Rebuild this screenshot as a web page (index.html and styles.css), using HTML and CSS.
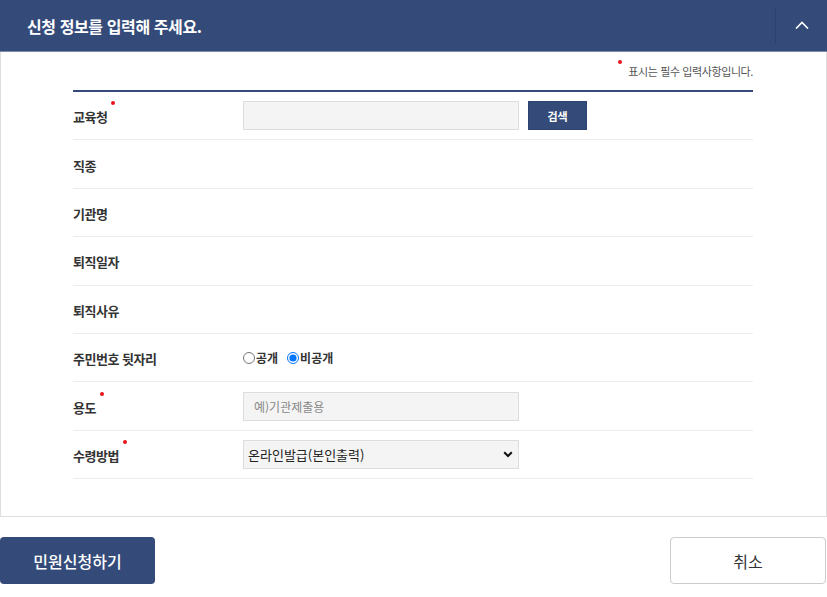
FILE: index.html
```html
<!DOCTYPE html>
<html lang="ko">
<head>
<meta charset="utf-8">
<title>신청 정보</title>
<link rel="stylesheet" href="styles.css">
</head>
<body>
<div class="panel">
  <div class="panel-head">
    <h2 class="panel-title">신청 정보를 입력해 주세요.</h2>
    <button class="toggle" type="button" aria-label="접기">
      <svg width="14" height="8" viewBox="0 0 14 8"><path d="M1 7.5 L7 1.5 L13 7.5" fill="none" stroke="#fff" stroke-width="1.6"/></svg>
    </button>
  </div>
  <div class="panel-body">
    <p class="req-note"><span class="dot"></span>표시는 필수 입력사항입니다.</p>
    <div class="form">
      <div class="row">
        <div class="label">교육청<span class="dot"></span></div>
        <div class="field">
          <input class="txt" type="text">
          <button class="btn-search" type="button">검색</button>
        </div>
      </div>
      <div class="row"><div class="label">직종</div><div class="field"></div></div>
      <div class="row"><div class="label">기관명</div><div class="field"></div></div>
      <div class="row"><div class="label">퇴직일자</div><div class="field"></div></div>
      <div class="row"><div class="label">퇴직사유</div><div class="field"></div></div>
      <div class="row">
        <div class="label">주민번호 뒷자리</div>
        <div class="field radios">
          <label class="radio"><input type="radio" name="rrn">공개</label>
          <label class="radio"><input type="radio" name="rrn" checked>비공개</label>
        </div>
      </div>
      <div class="row">
        <div class="label">용도<span class="dot"></span></div>
        <div class="field"><input class="txt" type="text" placeholder="예)기관제출용"></div>
      </div>
      <div class="row">
        <div class="label">수령방법<span class="dot"></span></div>
        <div class="field">
          <div class="select">
            <span>온라인발급(본인출력)</span>
            <svg width="10" height="7" viewBox="0 0 10 7"><path d="M1.2 1.2 L5 5 L8.8 1.2" fill="none" stroke="#111" stroke-width="2"/></svg>
          </div>
        </div>
      </div>
    </div>
  </div>
</div>
<div class="actions">
  <button class="btn-primary" type="button">민원신청하기</button>
  <button class="btn-cancel" type="button">취소</button>
</div>
</body>
</html>
```

FILE: styles.css
```css
* { box-sizing: border-box; }
html, body { margin: 0; padding: 0; background: #fff; }
body {
  font-family: "Noto Sans CJK KR", "Noto Sans", sans-serif;
  color: #333;
  width: 827px;
}
.panel { width: 827px; }
.panel-head {
  height: 52px;
  background: #344b79;
  border-bottom: 1px solid #7d8cab;
  display: flex;
  align-items: center;
  justify-content: space-between;
  padding-left: 27px;
}
.panel-title {
  margin: 0;
  color: #fff;
  font-size: 16px;
  font-weight: 700;
  letter-spacing: -0.4px;
}
.toggle {
  width: 52px;
  height: 36px;
  border: 0;
  border-left: 1px solid #2c416b;
  background: transparent;
  display: flex;
  align-items: center;
  justify-content: center;
  padding: 0 0 2px 0;
  margin-right: 0;
}
.panel-body {
  border: 1px solid #dedede;
  border-top: 0;
  padding: 10px 73px 37px 72px;
  height: 465px;
}
.req-note {
  margin: 0;
  text-align: right;
  font-size: 11px;
  color: #555;
  letter-spacing: -0.4px;
  height: 28px;
  line-height: 18px;
}
.req-note .dot { margin: 0 6px 0 0; top: -2px; }
.dot {
  display: inline-block;
  width: 4px;
  height: 4px;
  border-radius: 50%;
  background: #e8141c;
  position: relative;
  vertical-align: top;
}
.form { border-top: 2px solid #344b79; }
.row {
  display: flex;
  align-items: center;
  height: 48.4px;
  border-bottom: 1px solid #ececec;
}
.label {
  width: 170px;
  font-size: 13px;
  font-weight: 700;
  color: #333;
  letter-spacing: -0.5px;
  padding-top: 2px;
}
.label .dot { margin-left: 4px; top: -6px; }
.field { display: flex; align-items: center; gap: 9px; }
.txt {
  width: 276px;
  height: 29px;
  margin: 0;
  border: 1px solid #dddddd;
  background: #f4f4f4;
  font-family: inherit;
  font-size: 12px;
  padding: 0 10px;
  color: #333;
}
.txt::placeholder { color: #888; }
.btn-search {
  width: 59px;
  height: 29px;
  border: 1px solid #2e4470;
  background: #344b79;
  color: #fff;
  font-family: inherit;
  font-size: 11px;
  font-weight: 700;
  padding: 0;
}
.radios { gap: 9px; font-size: 12px; font-weight: 700; color: #333; }
.radio { display: flex; align-items: center; }
.radio input { margin: 0 1px 0 0; width: 12px; height: 12px; }
.select {
  width: 276px;
  height: 29px;
  border: 1px solid #dddddd;
  background: #f4f4f4;
  display: flex;
  align-items: center;
  justify-content: space-between;
  padding: 0 4px 0 4px;
  font-size: 13px;
  color: #222;
}
.select svg { margin-right: 1px; }
.actions {
  display: flex;
  justify-content: space-between;
  margin-top: 20px;
  width: 827px;
}
.btn-primary {
  width: 155px;
  height: 47px;
  border: 0;
  border-radius: 4px;
  background: #344b79;
  color: #fff;
  font-family: inherit;
  font-size: 16px;
  font-weight: 500;
}
.btn-cancel {
  width: 156px;
  height: 47px;
  border: 1px solid #cccccc;
  border-radius: 4px;
  background: #fff;
  color: #333;
  font-family: inherit;
  font-size: 16px;
  margin-right: 1px;
}
```
